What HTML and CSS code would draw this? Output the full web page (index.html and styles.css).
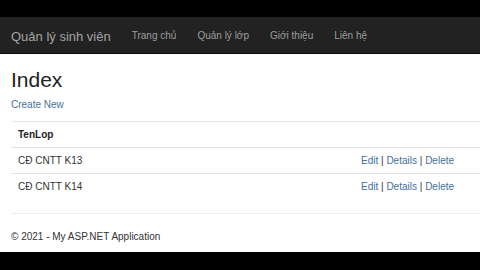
FILE: index.html
```html
<!DOCTYPE html>
<html lang="vi">
<head>
<meta charset="utf-8">
<title>Index</title>
<link rel="stylesheet" href="styles.css">
</head>
<body>
<div class="topband"></div>
<nav class="navbar">
  <a class="brand" href="#">Quản lý sinh viên</a>
  <ul class="nav">
    <li><a href="#">Trang chủ</a></li>
    <li><a href="#">Quản lý lớp</a></li>
    <li><a href="#">Giới thiệu</a></li>
    <li><a href="#">Liên hệ</a></li>
  </ul>
</nav>
<main class="content">
  <h1 class="title">Index</h1>
  <p class="create"><a href="#">Create New</a></p>
  <div class="table">
    <div class="row head">
      <div class="cell name">TenLop</div>
      <div class="cell actions"></div>
    </div>
    <div class="row">
      <div class="cell name">CĐ CNTT K13</div>
      <div class="cell actions"><a href="#">Edit</a> | <a href="#">Details</a> | <a href="#">Delete</a></div>
    </div>
    <div class="row">
      <div class="cell name">CĐ CNTT K14</div>
      <div class="cell actions"><a href="#">Edit</a> | <a href="#">Details</a> | <a href="#">Delete</a></div>
    </div>
  </div>
  <hr class="rule">
  <footer class="footer">© 2021 - My ASP.NET Application</footer>
</main>
<div class="bottomband"></div>
</body>
</html>
```

FILE: styles.css
```css
html, body {
  margin: 0;
  padding: 0;
}
body {
  width: 480px;
  height: 270px;
  overflow: hidden;
  background: #fff;
  color: #333;
  font-family: "Liberation Sans", Arial, sans-serif;
  font-size: 10px;
}
a {
  text-decoration: none;
}
.topband {
  height: 17px;
  background: #000;
}
.navbar {
  height: 36px;
  background: #222;
  border-bottom: 1px solid #080808;
  display: flex;
  align-items: center;
  padding-left: 11px;
}
.brand {
  color: #a4a4a4;
  font-size: 13px;
  line-height: 36px;
  padding-top: 3px;
  margin-right: 21px;
}
.nav {
  display: flex;
  gap: 21px;
  list-style: none;
  margin: 0;
  padding: 0;
}
.nav a {
  display: block;
  color: #9d9d9d;
  font-size: 10px;
  line-height: 36px;
  padding-top: 2px;
}
.content {
  padding: 0 0 0 11px;
}
.title {
  margin: 14px 0 0;
  font-size: 21px;
  font-weight: normal;
  line-height: 23px;
  color: #222;
}
.create {
  margin: 7px 0 0;
  line-height: 14px;
  font-size: 10px;
}
.create a, .actions a {
  color: #44709c;
}
.table {
  margin-top: 9px;
  width: 469px;
}
.row {
  display: flex;
  height: 26px;
  border-top: 1px solid #e2e2e2;
  box-sizing: border-box;
  align-items: center;
}
.row.head {
  border-top-color: #e8e8e8;
}
.cell {
  padding-left: 7px;
  line-height: 14px;
  box-sizing: border-box;
}
.row + .row .cell {
  padding-top: 1px;
}
.name {
  width: 343px;
}
.head .name {
  font-weight: bold;
  color: #222;
}
.actions {
  flex: 1;
}
.rule {
  margin: 14px 0 0;
  border: 0;
  border-top: 1px solid #eee;
  height: 0;
}
.footer {
  margin-top: 16px;
  line-height: 14px;
  height: 22px;
  font-size: 10px;
}
.bottomband {
  height: 18px;
  background: #000;
}
```
